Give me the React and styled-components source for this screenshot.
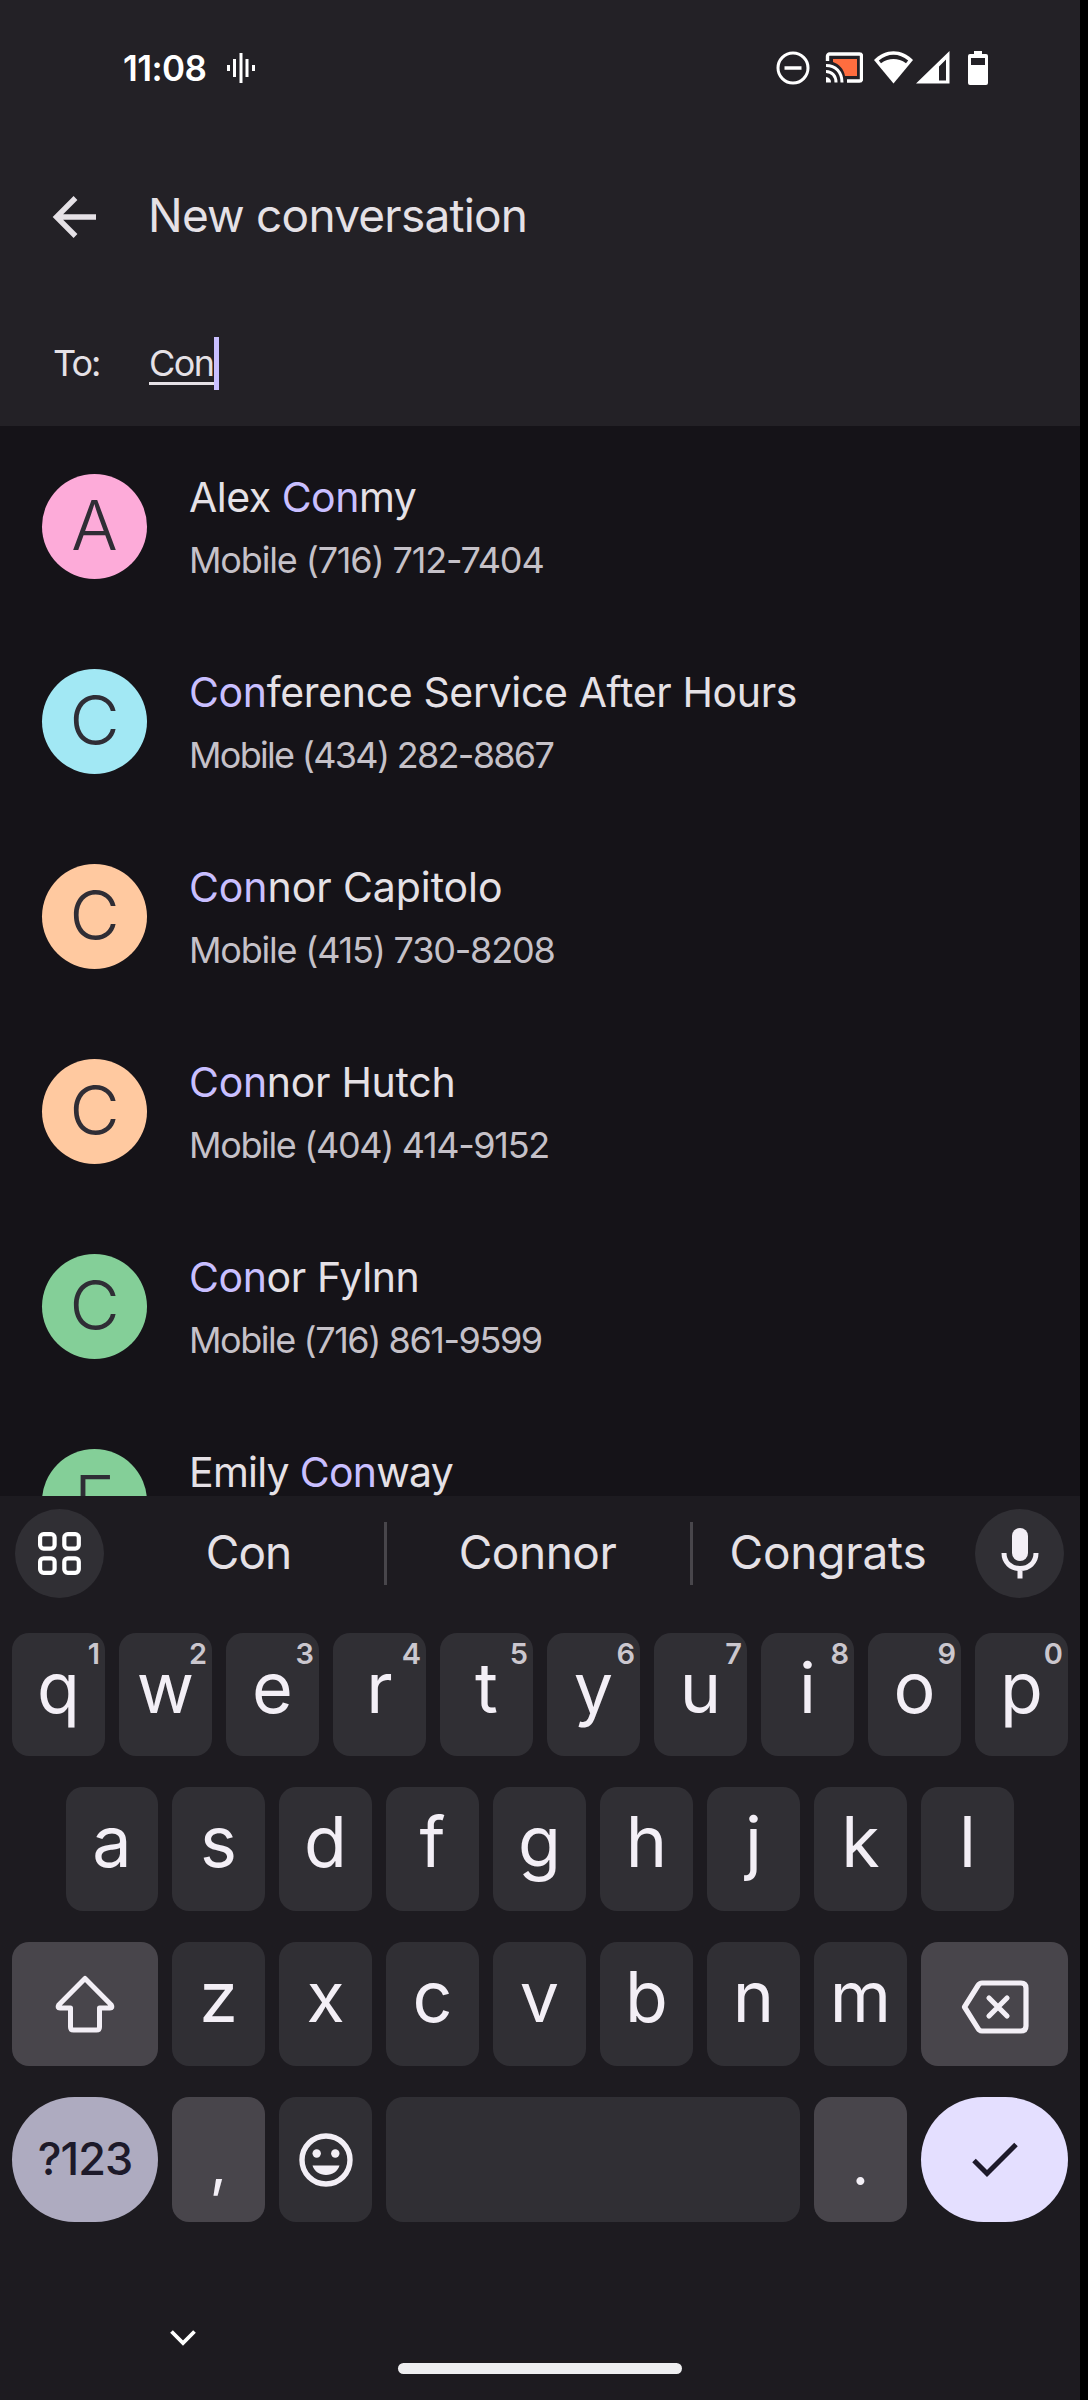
import React from "react";
import styled, { createGlobalStyle } from "styled-components";

const Global = createGlobalStyle`
  * { box-sizing: border-box; }
  body { margin: 0; background: #000; }
`;

const Screen = styled.div`
  width: 1080px;
  height: 2400px;
  display: flex;
  flex-direction: column;
  overflow: hidden;
  background: #151318;
  color: #e5e1e6;
  font-family: Inter, Roboto, "Liberation Sans", sans-serif;
`;

const Header = styled.header`
  height: 426px;
  flex: none;
  background: #232126;
`;

const StatusBar = styled.div`
  height: 135px;
  padding: 0 92px 0 123px;
  display: flex;
  align-items: center;
  color: #fff;
`;

const Clock = styled.span`
  font-size: 35px;
  font-weight: 600;
  letter-spacing: -0.6px;
  margin-right: 21px;
`;

const StatusIcons = styled.div`
  margin-left: auto;
  display: flex;
  align-items: center;
`;

const StatusIcon = styled.svg`
  display: block;
  margin-left: ${(p) => p.$gap || 0}px;
`;

const TitleBar = styled.div`
  height: 161px;
  display: flex;
  align-items: center;
  padding: 2px 0 0 52px;
`;

const Title = styled.h1`
  margin: 0 0 3px 52px;
  font-size: 46px;
  line-height: 60px;
  font-weight: 400;
  letter-spacing: -0.78px;
`;

const ToRow = styled.div`
  height: 130px;
  display: flex;
  align-items: center;
  padding-left: 53px;
  font-size: 36px;
  line-height: 53px;
`;

const ToLabel = styled.span`
  width: 96px;
  padding-top: 5px;
  letter-spacing: -2px;
`;

const ToInput = styled.span`
  width: 65px;
  height: 48px;
  line-height: 53px;
  border-bottom: 3px solid #e5e1e6;
  letter-spacing: -1.6px;
`;

const Caret = styled.span`
  width: 5px;
  height: 53px;
  margin-top: 5px;
  background: #c9bfff;
`;

const List = styled.main`
  height: 1070px;
  flex: none;
  overflow: hidden;
  padding-top: 48px;
`;

const Contact = styled.div`
  height: 195px;
  padding-left: 42px;
  display: flex;
  align-items: flex-start;
`;

const Avatar = styled.div`
  width: 105px;
  height: 105px;
  border-radius: 50%;
  background: ${(p) => p.$color};
  color: #2f2d35;
  font-size: 69px;
  font-weight: 350;
  line-height: 103px;
  text-align: center;
`;

const Info = styled.div`
  margin-left: 42px;
  white-space: nowrap;
`;

const Name = styled.div`
  font-size: 41px;
  line-height: 46px;
  letter-spacing: ${(p) => p.$spacing}px;
`;

const Match = styled.span`
  color: #c9bfff;
`;

const Phone = styled.div`
  margin-top: 18px;
  font-size: 36px;
  line-height: 44px;
  color: #c5c1c8;
  letter-spacing: ${(p) => p.$spacing}px;
`;

const Keyboard = styled.section`
  height: 904px;
  flex: none;
  background: #1d1b20;
  display: flex;
  flex-direction: column;
`;

const Suggestions = styled.div`
  height: 137px;
  flex: none;
  padding: 13px 16px 0 15px;
  display: flex;
  align-items: flex-start;
`;

const RoundButton = styled.div`
  width: 89px;
  height: 89px;
  border-radius: 50%;
  background: #302f34;
  display: flex;
  align-items: center;
  justify-content: center;
`;

const Suggestion = styled.div`
  width: ${(p) => p.$width}px;
  padding-left: ${(p) => p.$before || 0}px;
  padding-right: ${(p) => p.$after || 0}px;
  height: 89px;
  line-height: 87px;
  text-align: center;
  font-size: 46px;
  letter-spacing: ${(p) => p.$spacing || 0}px;
`;

const Divider = styled.div`
  width: 3px;
  height: 63px;
  margin-top: 13px;
  background: #48464b;
`;

const KeyRow = styled.div`
  height: ${(p) => p.$height || 155}px;
  flex: none;
  padding-left: ${(p) => p.$inset}px;
  display: flex;
  gap: 14px;
`;

const keyColors = { plain: "#302f34", special: "#48454b", symbols: "#aeabc0", enter: "#e4dfff" };

const Key = styled.div`
  position: relative;
  width: ${(p) => p.$width || 93}px;
  height: ${(p) => p.$height || 124}px;
  border-radius: ${(p) => (p.$tone === "symbols" || p.$tone === "enter" ? 63 : 17)}px;
  background: ${(p) => keyColors[p.$tone || "plain"]};
  color: #f3eff6;
  font-size: 70px;
  line-height: 109px;
  display: flex;
  align-items: center;
  justify-content: center;
`;

const Letter = styled.span`
  height: 124px;
`;

const Hint = styled.span`
  position: absolute;
  top: 6px;
  right: 5px;
  font-size: 29px;
  line-height: 29px;
  font-weight: 600;
  color: #cbc7ce;
`;

const Symbols = styled.span`
  height: 124px;
  line-height: 121px;
  font-size: 45px;
  font-weight: 500;
  letter-spacing: -1px;
  color: #1d1a2a;
`;

const Punctuation = styled.span`
  height: 124px;
  line-height: 130px;
  font-size: 60px;
`;

const Footer = styled.div`
  flex: 1;
  display: flex;
  align-items: flex-start;
`;

const HideIcon = styled.svg`
  margin: 78px 0 0 170px;
`;

const HomeBar = styled.div`
  width: 284px;
  height: 11px;
  margin: 111px 0 0 202px;
  border-radius: 6px;
  background: #eeeef0;
`;

const contacts = [
  { initial: "A", color: "#fdabd9", name: ["Alex ", "my"], phone: "(716) 712-7404", nameSpacing: -0.5, phoneSpacing: -1.15 },
  { initial: "C", color: "#a2e8f4", name: ["", "ference Service After Hours"], phone: "(434) 282-8867", nameSpacing: -0.36, phoneSpacing: -1.7 },
  { initial: "C", color: "#ffc9a0", name: ["", "nor Capitolo"], phone: "(415) 730-8208", nameSpacing: -0.08, phoneSpacing: -1.2 },
  { initial: "C", color: "#ffc9a0", name: ["", "nor Hutch"], phone: "(404) 414-9152", nameSpacing: -0.3, phoneSpacing: -1.35 },
  { initial: "C", color: "#84cf98", name: ["", "or Fylnn"], phone: "(716) 861-9599", nameSpacing: -0.4, phoneSpacing: -1.45 },
  { initial: "E", color: "#84cf98", name: ["Emily ", "way"], phone: "", nameSpacing: -0.75, phoneSpacing: 0 },
];

const LetterKey = ({ c, hint, width, height }) => (
  <Key $width={width} $height={height}>
    <Letter>{c}</Letter>
    {hint && <Hint>{hint}</Hint>}
  </Key>
);

export default function App() {
  return (
    <>
      <Global />
      <Screen>
        <Header>
          <StatusBar>
            <Clock>11:08</Clock>
            <svg width="28" height="30" viewBox="0 0 28 30" fill="#fff">
              <path d="M0 12h3v6H0zM6 6h3v18H6zM12.500 0h3v30h-3zM18.500 6h3v18h-3zM25 12h3v6h-3z" />
            </svg>
            <StatusIcons>
              <StatusIcon width="34" height="34" viewBox="0 0 34 34" fill="none" stroke="#fff" strokeWidth="3">
                <circle cx="17" cy="17" r="15" />
                <path d="M8.500 17h17" strokeWidth="3.500" />
              </StatusIcon>
              <StatusIcon $gap={15} width="38" height="31" viewBox="0 0 38 31" fill="none">
                <path d="M8 7h24v17H20C19 17 14 12 8 10z" fill="#ff6d3f" />
                <path d="M2.500 9V4a2 2 0 0 1 2-2h30a2 2 0 0 1 2 2v23a2 2 0 0 1-2 2H22" stroke="#fff" strokeWidth="3.400" />
                <path d="M1 13.500C10.500 13.500 17 20 17 30.500M1 19.500C7 19.500 11 24 11 30.500" stroke="#fff" strokeWidth="3" />
                <path d="M1 25v5.500H6a5 5 0 0 0-5-5.500z" fill="#fff" />
              </StatusIcon>
              <StatusIcon $gap={11} width="39" height="33" viewBox="0 0 39 33">
                <path d="M0 9C11 -2.700 28 -2.700 39 9L19.500 32.500z" fill="#fff" />
                <path d="M4.800 9.600C14 1.900 25 1.900 34.200 9.600L32 12.200C24 6.700 15 6.700 7 12.200z" fill="#232126" />
              </StatusIcon>
              <StatusIcon $gap={3} width="34" height="33" viewBox="0 0 34 33">
                <path d="M33.500 0V32.500H0zM30 8.500L23 15.500V29.500h7z" fill="#fff" fillRule="evenodd" />
              </StatusIcon>
              <StatusIcon $gap={18} width="20" height="34" viewBox="0 0 20 34">
                <path d="M6 0h8v3h4a2 2 0 0 1 2 2v27a2 2 0 0 1-2 2H2a2 2 0 0 1-2-2V5a2 2 0 0 1 2-2h4zM3 7v7h14V7z" fill="#fff" fillRule="evenodd" />
              </StatusIcon>
            </StatusIcons>
          </StatusBar>
          <TitleBar>
            <svg width="44" height="42" viewBox="0 0 44 42" fill="none" stroke="#e5e1e6" strokeWidth="5.400">
              <path d="M44 21H5M23.500 2L4.500 21l19 19" />
            </svg>
            <Title>New conversation</Title>
          </TitleBar>
          <ToRow>
            <ToLabel>To:</ToLabel>
            <ToInput>Con</ToInput>
            <Caret />
          </ToRow>
        </Header>

        <List>
          {contacts.map((c, i) => (
            <Contact key={i}>
              <Avatar $color={c.color}>{c.initial}</Avatar>
              <Info>
                <Name $spacing={c.nameSpacing}>
                  {c.name[0]}
                  <Match>Con</Match>
                  {c.name[1]}
                </Name>
                {c.phone && <Phone $spacing={c.phoneSpacing}>Mobile {c.phone}</Phone>}
              </Info>
            </Contact>
          ))}
        </List>

        <Keyboard>
          <Suggestions>
            <RoundButton>
              <svg width="43" height="43" viewBox="0 0 43 43" fill="none" stroke="#fff" strokeWidth="4.200">
                <rect x="2.100" y="2.100" width="14.500" height="14.500" rx="3.500" />
                <rect x="26.300" y="2.100" width="14.500" height="14.500" rx="3.500" />
                <rect x="2.100" y="26.300" width="14.500" height="14.500" rx="3.500" />
                <rect x="26.300" y="26.300" width="14.500" height="14.500" rx="3.500" />
              </svg>
            </RoundButton>
            <Suggestion $width={280} $spacing={-1} $before={9}>Con</Suggestion>
            <Divider />
            <Suggestion $width={303} $spacing={-0.5} $after={2}>Connor</Suggestion>
            <Divider />
            <Suggestion $width={282} $spacing={-0.2} $after={12}>Congrats</Suggestion>
            <RoundButton>
              <svg width="38" height="51" viewBox="0 0 38 51" fill="none">
                <rect x="11" y="0" width="16" height="33" rx="8" fill="#f3eff6" />
                <path d="M3 25C3 34.500 10 40.500 19 40.500S35 34.500 35 25M19 40.500v10" stroke="#f3eff6" strokeWidth="5" />
              </svg>
            </RoundButton>
          </Suggestions>

          <KeyRow $inset={12} $height={154}>
            {"qwertyuiop".split("").map((c, i) => (
              <LetterKey key={c} c={c} hint={String((i + 1) % 10)} height={123} />
            ))}
          </KeyRow>
          <KeyRow $inset={66}>
            {"asdfghjkl".split("").map((c, i) => (
              <LetterKey key={c} c={c} width={i === 0 ? 92 : 93} />
            ))}
          </KeyRow>
          <KeyRow $inset={12}>
            <Key $tone="special" $width={146}>
              <svg width="60" height="60" viewBox="0 0 60 60" fill="none" stroke="#f3eff6" strokeWidth="5" strokeLinejoin="round">
                <path d="M30 4.500L3.700 31Q2 34 5 34H15.500V53Q15.500 56 18.500 56H41.500Q44.500 56 44.500 53V34H55Q58 34 56.300 31z" />
              </svg>
            </Key>
            {"zxcvbnm".split("").map((c) => (
              <LetterKey key={c} c={c} />
            ))}
            <Key $tone="special" $width={147}>
              <svg width="68" height="60" viewBox="0 -6 68 60" fill="none" stroke="#f3eff6" strokeWidth="5.200" strokeLinejoin="round" strokeLinecap="round">
                <path d="M21 3H60Q65 3 65 8V46Q65 51 60 51H21Q18.500 51 17 48.500L3.500 27L17 5.500Q18.500 3 21 3z" />
                <path d="M28 18L46 36M46 18L28 36" />
              </svg>
            </Key>
          </KeyRow>
          <KeyRow $inset={12}>
            <Key $tone="symbols" $width={146} $height={125}><Symbols>?123</Symbols></Key>
            <Key $tone="special" $height={125}><Punctuation>,</Punctuation></Key>
            <Key $height={125}>
              <svg width="54" height="54" viewBox="0 0 54 54" fill="#f3eff6">
                <circle cx="27" cy="27" r="24" fill="none" stroke="#f3eff6" strokeWidth="5.400" />
                <circle cx="17.700" cy="20.500" r="4.200" />
                <circle cx="36.300" cy="20.500" r="4.200" />
                <path d="M13.500 32.500h27C38.500 38.500 33.500 42 27 42s-11.500-3.500-13.500-9.500z" />
              </svg>
            </Key>
            <Key $width={414} $height={125} />
            <Key $tone="special" $height={125}><Punctuation>.</Punctuation></Key>
            <Key $tone="enter" $width={147} $height={125}>
              <svg width="46" height="36" viewBox="0 0 46 36" fill="none" stroke="#1d1a2a" strokeWidth="5">
                <path d="M2 18.500L15 31.500L44 2.500" />
              </svg>
            </Key>
          </KeyRow>
          <Footer>
            <HideIcon width="26" height="16" viewBox="0 0 26 16" fill="none" stroke="#fff" strokeWidth="3.800">
              <path d="M1.500 1.500L13 13L24.500 1.500" />
            </HideIcon>
            <HomeBar />
          </Footer>
        </Keyboard>
      </Screen>
    </>
  );
}
